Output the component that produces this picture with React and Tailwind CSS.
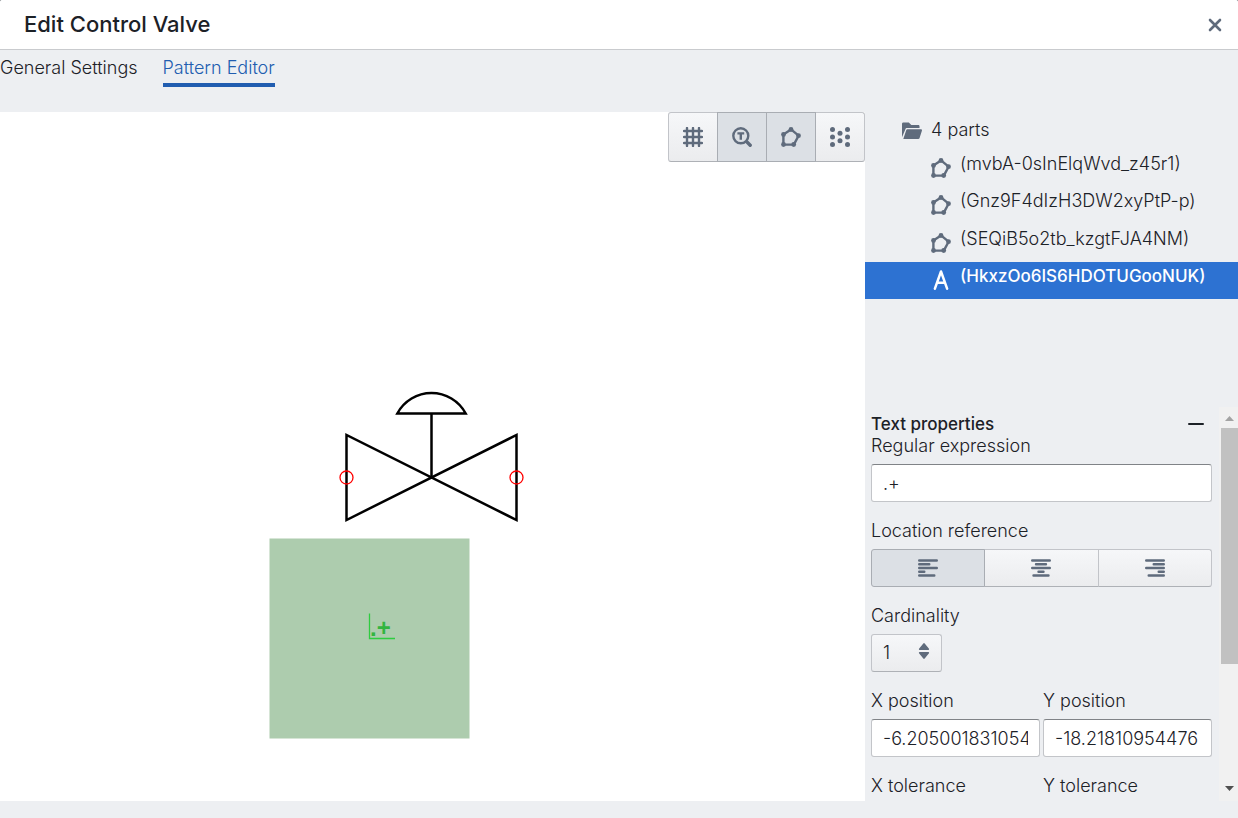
import React from "react";

const PARTS = [
  { id: "mvbA-0sInElqWvd_z45r1", kind: "shape" },
  { id: "Gnz9F4dIzH3DW2xyPtP-p", kind: "shape" },
  { id: "SEQiB5o2tb_kzgtFJA4NM", kind: "shape" },
  { id: "HkxzOo6IS6HDOTUGooNUK", kind: "text" },
];

function Icon({ children, className = "" }) {
  return (
    <svg viewBox="0 0 20 20" aria-hidden="true" className={"h-5 w-5 shrink-0 " + className} fill="currentColor">
      {children}
    </svg>
  );
}

function GridIcon() {
  return (
    <Icon>
      <path
        d="M4 1V19M10 1V19M16 1V19M1 4H19M1 10H19M1 16H19"
        fill="none"
        stroke="currentColor"
        strokeWidth="2.4"
        strokeLinecap="round"
      />
    </Icon>
  );
}

function TextSearchIcon() {
  return (
    <Icon>
      <circle cx="8.8" cy="8.8" r="7.5" fill="none" stroke="currentColor" strokeWidth="2.4" />
      <path d="M15 15L18.2 18.2" fill="none" stroke="currentColor" strokeWidth="3.4" strokeLinecap="round" />
      <path d="M5.4 5.2H12.2V7.5H10V12.8H7.6V7.5H5.4Z" />
    </Icon>
  );
}

function PolygonIcon() {
  return (
    <Icon>
      <path
        d="M10 2.4L17.6 8.7L12.8 17.6H2.4V7.5Z"
        fill="none"
        stroke="currentColor"
        strokeWidth="2.4"
        strokeLinejoin="round"
      />
      <circle cx="10" cy="2.5" r="2.4" />
      <circle cx="17.5" cy="8.7" r="2.4" />
      <circle cx="12.7" cy="17.5" r="2.4" />
      <circle cx="2.5" cy="17.5" r="2.4" />
      <circle cx="2.5" cy="7.5" r="2.4" />
    </Icon>
  );
}

function DotsIcon() {
  const dots = [
    [2.5, 2.5],
    [2.5, 10],
    [2.5, 17.5],
    [10, 6.25],
    [10, 13.75],
    [17.5, 2.5],
    [17.5, 10],
    [17.5, 17.5],
  ];
  return (
    <Icon>
      {dots.map(([x, y]) => (
        <circle key={x + "-" + y} cx={x} cy={y} r="2.5" />
      ))}
    </Icon>
  );
}

function FolderIcon() {
  return (
    <Icon className="text-[#5f6b7c]">
      <path d="M3.3 8.4C3.6 7.6 4.2 7.1 5 7.1H17.5V5.2C17.5 4.4 17 3.9 16.2 3.9H9.3L7.3 2C7 1.7 6.7 1.6 6.3 1.6H1.3C.6 1.6 0 2.2 0 2.9V16.2Z" />
      <path d="M18.9 8.3H5.4C4.9 8.3 4.5 8.6 4.3 9L1.3 18H16.3C16.8 18 17.3 17.6 17.5 17.2L19.9 9.8C20.2 9 19.7 8.3 18.9 8.3Z" />
    </Icon>
  );
}

function FontIcon() {
  return (
    <Icon className="text-white">
      <path
        d="M3.9 18.7L10 1.5L16.1 18.7M6 12.8H14"
        fill="none"
        stroke="currentColor"
        strokeWidth="2.5"
        strokeLinecap="round"
        strokeLinejoin="round"
      />
    </Icon>
  );
}

function AlignIcon({ d }) {
  return (
    <Icon>
      <path d={d} fill="none" stroke="currentColor" strokeWidth="2.4" strokeLinecap="round" />
    </Icon>
  );
}

const TOOLS = [
  { label: "Show grid", icon: <GridIcon />, on: false },
  { label: "Show text search areas", icon: <TextSearchIcon />, on: true },
  { label: "Show shapes", icon: <PolygonIcon />, on: true },
  { label: "Show points", icon: <DotsIcon />, on: false },
];

const ALIGNMENTS = [
  { label: "Left", on: true, d: "M1.2 2.5H18.8M1.2 6.2H11.3M1.2 10H18.8M1.2 13.8H6.3M1.2 17.5H16.3" },
  { label: "Center", on: false, d: "M1.2 2.5H18.8M5 6.2H15M1.2 10H18.8M7.5 13.8H12.5M2.5 17.5H17.5" },
  { label: "Right", on: false, d: "M1.2 2.5H18.8M8.7 6.2H18.8M1.2 10H18.8M13.7 13.8H18.8M3.7 17.5H18.8" },
];

const BTN_OFF = "bg-linear-to-b from-[#f6f7f9] to-[#ebecee] border-[#c2c4c9] border-b-[#aeb1b6]";
const BTN_ON = "bg-[#dce0e5] border-[#a9adb3]";
const INPUT =
  "h-[38px] w-full min-w-0 rounded-[3px] border border-[#c3c5c9] border-t-[#808387] bg-white px-[11px] font-light text-[#1c2127] outline-none";

function ValveDrawing() {
  return (
    <svg
      viewBox="0 112 864 689"
      preserveAspectRatio="xMinYMin meet"
      className="h-[689px] w-[864px] shrink-0"
      role="img"
      aria-label="Control valve pattern"
    >
      <rect x="269.5" y="538.5" width="200" height="200" fill="#adccae" />
      <g fill="none" stroke="#000" strokeWidth="2.5">
        <path d="M346.5 435V520L516.5 435V520Z" />
        <path d="M431.5 477.5V413.5" />
        <path d="M397.3 413.5A38.8 38.8 0 0 1 465.7 413.5Z" />
      </g>
      <g fill="none" stroke="#f00" strokeWidth="1.3">
        <circle cx="346.5" cy="477.5" r="6.5" />
        <circle cx="516.5" cy="477.5" r="6.5" />
      </g>
      <path d="M369.5 613.5V638.5H395" fill="none" stroke="#2fcc40" strokeWidth="1.3" />
      <text x="370" y="636" fill="#33b540" fontFamily="Liberation Sans, sans-serif" fontWeight="700" fontSize="24">
        .+
      </text>
    </svg>
  );
}

function Field({ label, htmlFor, children }) {
  return (
    <div className="flex min-w-0 flex-1 flex-col gap-[7px]">
      <label htmlFor={htmlFor} className="block">
        {label}
      </label>
      {children}
    </div>
  );
}

export default function App() {
  return (
    <div className="h-screen bg-[#4b4f54] font-['Inter',sans-serif] text-[18px] leading-[22px] font-light text-[#1c2127]">
      <div className="flex h-full flex-col overflow-hidden rounded-t-[2px] bg-[#edeff2]">
        <header className="flex h-[50px] shrink-0 items-center justify-between border-b border-[#c9cbce] bg-white pr-[13px] pl-6">
          <h1 className="pb-0.5 text-[22px] font-medium">Edit Control Valve</h1>
          <button type="button" aria-label="Close" className="text-[#5f6b7c]">
            <Icon>
              <path d="M5 5L15 15M15 5L5 15" stroke="currentColor" strokeWidth="2.6" strokeLinecap="round" />
            </Icon>
          </button>
        </header>

        <div role="tablist" className="mb-[25px] flex h-[37px] shrink-0 gap-[25px]">
          <button type="button" role="tab" aria-selected="false" className="border-b-4 border-transparent pt-0.5">
            General Settings
          </button>
          <button
            type="button"
            role="tab"
            aria-selected="true"
            className="border-b-4 border-[#215db0] pt-0.5 text-[#215db0]"
          >
            Pattern Editor
          </button>
        </div>

        <main className="flex min-h-0 flex-1 pb-[17px]">
          <section className="relative min-w-0 flex-1 overflow-hidden bg-white">
            <ValveDrawing />
            <div className="absolute top-0 right-0 flex text-[#5f6b7c]">
              {TOOLS.map((t) => (
                <button
                  key={t.label}
                  type="button"
                  aria-label={t.label}
                  aria-pressed={t.on}
                  className={
                    "-ml-px flex h-[50px] w-[50px] items-center justify-center border first:rounded-l-[3px] last:rounded-r-[3px] " +
                    (t.on ? BTN_ON + " z-10" : BTN_OFF)
                  }
                >
                  {t.icon}
                </button>
              ))}
            </div>
          </section>

          <aside className="flex w-[373px] shrink-0 flex-col">
            <ul className="grid h-[187px] shrink-0 grid-rows-5">
              <li className="flex items-center gap-[9px] pl-[37px]">
                <FolderIcon />
                <span className="pb-0.5">4 parts</span>
              </li>
              {PARTS.map((p) => (
                <li
                  key={p.id}
                  className={
                    "flex items-center gap-[9px] pl-[66px] " +
                    (p.kind === "text" ? "bg-[#2d72d2] text-[17px] font-medium text-white" : "")
                  }
                >
                  <span className="text-[#5f6b7c]">{p.kind === "text" ? <FontIcon /> : <PolygonIcon />}</span>
                  <span className="pb-2">({p.id})</span>
                </li>
              ))}
            </ul>

            <div className="mt-[108px] flex min-h-0 flex-1">
              <form className="min-w-0 flex-1 overflow-y-auto pt-1.5 pr-[7px] pl-1.5 [scrollbar-width:none]">
                <div className="flex items-center justify-between pr-2">
                  <h2 className="text-[17px] font-medium">Text properties</h2>
                  <button type="button" aria-label="Collapse" className="flex h-4 w-4 items-center">
                    <span className="h-0.5 w-full rounded-full bg-[#1c2127]" />
                  </button>
                </div>
                <div className="flex flex-col gap-[18px]">
                  <Field label="Regular expression" htmlFor="regex">
                    <input id="regex" defaultValue=".+" className={INPUT} />
                  </Field>
                  <fieldset>
                    <legend className="pb-[7px]">Location reference</legend>
                    <div className="flex text-[#5f6b7c]">
                      {ALIGNMENTS.map((a) => (
                        <button
                          key={a.label}
                          type="button"
                          aria-label={a.label}
                          aria-pressed={a.on}
                          className={
                            "-ml-px flex h-[38px] flex-1 items-center justify-center border first:ml-0 first:rounded-l-[3px] last:rounded-r-[3px] " +
                            (a.on ? BTN_ON + " z-10" : BTN_OFF)
                          }
                        >
                          <AlignIcon d={a.d} />
                        </button>
                      ))}
                    </div>
                  </fieldset>
                  <Field label="Cardinality" htmlFor="cardinality">
                    <div className="relative w-[71px]">
                      <select
                        id="cardinality"
                        defaultValue="1"
                        className={"h-[38px] w-full appearance-none rounded-[3px] border px-[11px] outline-none " + BTN_OFF}
                      >
                        <option>1</option>
                        <option>?</option>
                        <option>*</option>
                        <option>+</option>
                      </select>
                      <Icon className="pointer-events-none absolute top-[7px] right-2 text-[#5f6b7c]">
                        <path d="M5.5 9H14.5Q15.500 8.700 15 7.800L10.700 2.400Q10 1.700 9.300 2.400L5 7.800Q4.500 8.700 5.500 9ZM5.500 11H14.500Q15.500 11.300 15 12.200L10.700 17.600Q10 18.300 9.300 17.600L5 12.200Q4.500 11.300 5.500 11Z" />
                      </Icon>
                    </div>
                  </Field>
                  <div className="flex gap-[3px]">
                    <Field label="X position" htmlFor="x-position">
                      <input id="x-position" defaultValue="-6.2050018310546875" className={INPUT} />
                    </Field>
                    <Field label="Y position" htmlFor="y-position">
                      <input id="y-position" defaultValue="-18.21810954476" className={INPUT} />
                    </Field>
                  </div>
                  <div className="flex gap-[3px]">
                    <Field label="X tolerance" htmlFor="x-tolerance">
                      <input id="x-tolerance" defaultValue="50" className={INPUT} />
                    </Field>
                    <Field label="Y tolerance" htmlFor="y-tolerance">
                      <input id="y-tolerance" defaultValue="50" className={INPUT} />
                    </Field>
                  </div>
                </div>
              </form>
              <div aria-hidden="true" className="flex w-[19px] shrink-0 flex-col bg-[#f1f1f1] pl-0.5">
                <svg viewBox="0 0 17 21" className="h-[21px] w-[17px] shrink-0">
                  <path d="M4 14L8.500 9L13 14Z" fill="#a3a3a3" />
                </svg>
                <div className="h-[236px] shrink-0 bg-[#c1c1c1]" />
                <svg viewBox="0 0 17 21" className="mt-auto h-[21px] w-[17px] shrink-0">
                  <path d="M4 6L8.500 11L13 6Z" fill="#505050" />
                </svg>
              </div>
            </div>
          </aside>
        </main>
      </div>
    </div>
  );
}
